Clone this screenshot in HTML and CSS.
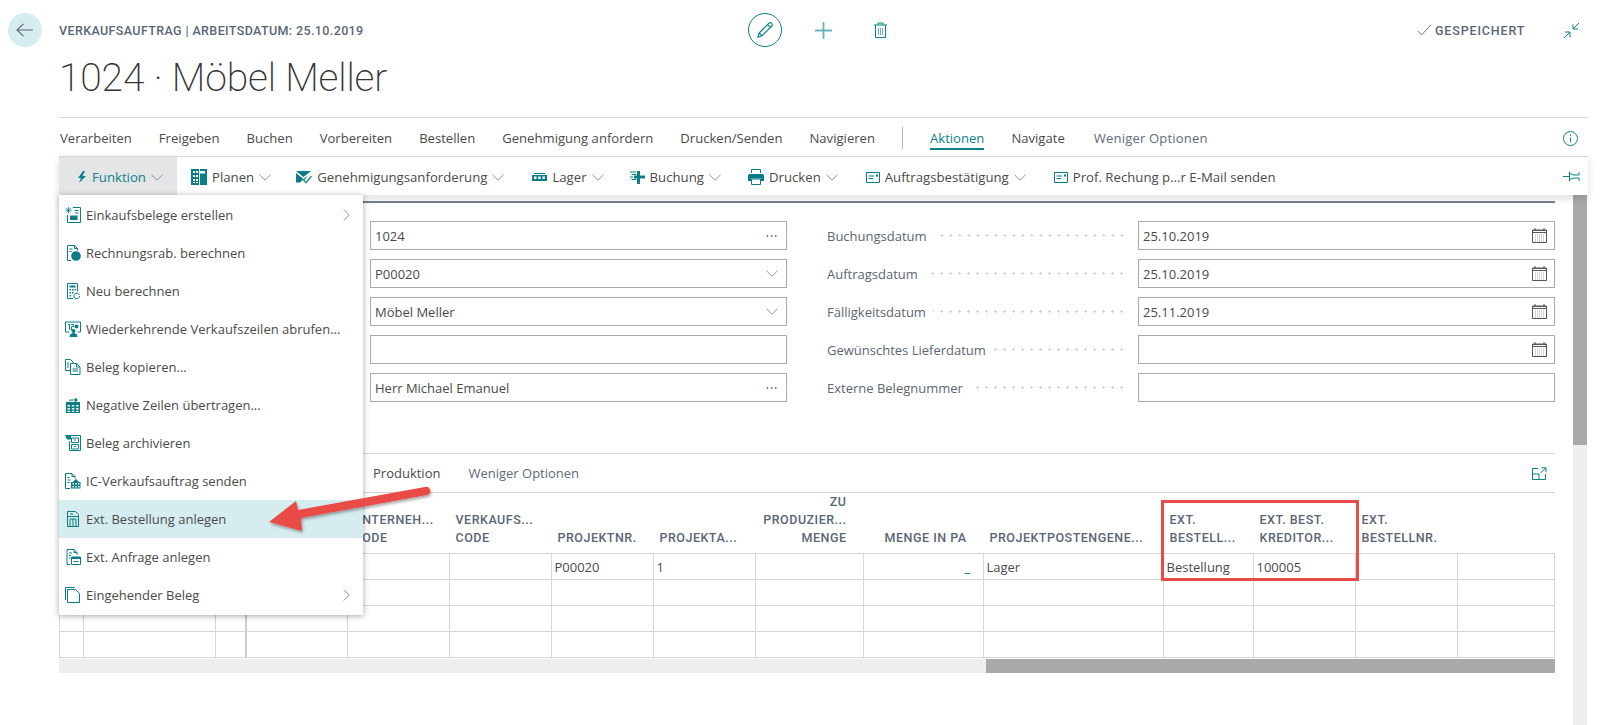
FILE: index.html
```html
<!DOCTYPE html>
<html lang="de">
  <head>
    <meta charset="UTF-8" />
    <meta name="viewport" content="width=device-width, initial-scale=1.0" />
    <title>1024 · Möbel Meller</title>
    <link rel="stylesheet" href="styles.css">
  </head>
  <body>
    <svg class="sprites" width="0" height="0" aria-hidden="true">
      <symbol id="chev-down" viewBox="0 0 12 7"><path d="M.5.8 6 6.200 11.500.8" fill="none" stroke="currentColor" stroke-width=".8"/></symbol>
      <symbol id="chev-right" viewBox="0 0 7 12"><path d="M.8.5 6.200 6 .8 11.500" fill="none" stroke="currentColor" stroke-width=".8"/></symbol>
      <symbol id="cal" viewBox="0 0 15 15">
        <path d="M.5 2.500h14v12H.5z" fill="none" stroke="#555"/>
        <path d="M.5 2h14v2.500H.5zM3 0v2M12 0v2" fill="none" stroke="#555"/>
        <path d="M3 7h9M3 9h9M3 11h9M3 13h9" stroke="#aaa" stroke-dasharray="1 1"/>
      </symbol>
    </svg>

    <div class="page">
      <!-- Page header -->
      <div class="topbar">
        <a class="back-btn">
          <svg width="18" height="14" viewBox="0 0 18 14"><path d="M17 7H1M7.500.8 1 7l6.500 6.200" fill="none" stroke="#5a6470" stroke-width="1.100"/></svg>
        </a>
        <div class="breadcrumb">VERKAUFSAUFTRAG | ARBEITSDATUM: 25.10.2019</div>
        <div class="page-actions">
          <a class="edit-btn">
            <svg width="20" height="20" viewBox="0 0 20 20"><path d="M4.200 13 14 3.200a1.600 1.600 0 0 1 2.400 0l.4.4a1.600 1.600 0 0 1 0 2.400L7 15.800 3 17zM12.600 4.600l2.800 2.800M4.200 13 7 15.800" fill="none" stroke="#0a8288" stroke-width="1.200"/></svg>
          </a>
          <svg class="plus-icon" width="17" height="17" viewBox="0 0 17 17"><path d="M8.500 0v17M0 8.500h17" stroke="#62b5b8" stroke-width="1.800"/></svg>
          <svg class="trash-icon" width="15" height="16" viewBox="0 0 15 16"><path d="M1 3h13M5 3V1h5v2M2.500 3v12.500h10V3" fill="none" stroke="#0a8288"/><path d="M5.500 6v7M7.500 6v7M9.500 6v7" stroke="#6ab5b8"/></svg>
        </div>
        <div class="saved">
          <svg width="15" height="12" viewBox="0 0 15 12"><path d="M.8 7 4.500 11 14 .8" fill="none" stroke="#6b7480"/></svg>
          GESPEICHERT
        </div>
        <svg class="collapse-icon" width="17" height="17" viewBox="0 0 17 17"><path d="M16 1 10 7M10 2.500V7h5M1 16l6-6M2 10h5v5" fill="none" stroke="#0a8288"/></svg>
      </div>
      <h1 class="title">1024 · Möbel Meller</h1>

      <!-- Action tabs -->
      <div class="tabs">
        <a>Verarbeiten</a>
        <a>Freigeben</a>
        <a>Buchen</a>
        <a>Vorbereiten</a>
        <a>Bestellen</a>
        <a>Genehmigung anfordern</a>
        <a>Drucken/Senden</a>
        <a>Navigieren</a>
        <span class="tab-sep"></span>
        <a class="active">Aktionen</a>
        <a>Navigate</a>
        <a class="muted">Weniger Optionen</a>
        <svg class="info-icon" width="15" height="15" viewBox="0 0 15 15"><circle cx="7.500" cy="7.500" r="7" fill="none" stroke="#0a8288"/><path d="M7.500 6.500v5M7.500 3.500v1.500" stroke="#0a8288"/></svg>
      </div>

      <div class="action-bar">
        <a class="action first">
          <svg width="10" height="12" viewBox="0 0 10 12"><path d="M6 0 1 7h3l-2 5 7-7H5.500L8 0z" fill="#0a8288"/></svg>
          <span class="teal">Funktion</span>
          <svg class="chev"><use href="#chev-down"/></svg>
        </a>
        <a class="action pr-11">
          <svg width="16" height="16" viewBox="0 0 16 16"><path d="M0 0h16v16H0z" fill="#0a7d85"/><path d="M2 2h2v2H2zM5 2h2v2H5zM9 2h5v2.500H9zM2 6h2v2H2zM5 6h2v2H5zM2 10h2v2H2zM5 10h2v2H5zM2 13h2v1H2zM5 13h2v1H5z" fill="#fff"/><path d="M8 0h1v16H8z" fill="#fff"/></svg>
          Planen
          <svg class="chev"><use href="#chev-down"/></svg>
        </a>
        <a class="action">
          <svg width="16" height="13" viewBox="0 0 16 13"><path d="M0 0h15L7.500 6zM0 2l7.500 6L12 4.500l-4 5-1-1-3 3H0z" fill="#0a7d85"/><path d="m7 8.500 3 3 5.500-6.500" fill="none" stroke="#3f8f95" stroke-width="1.600"/></svg>
          Genehmigungsanforderung
          <svg class="chev"><use href="#chev-down"/></svg>
        </a>
        <a class="action pr-12">
          <svg width="15" height="9" viewBox="0 0 15 9"><path d="M2 0h11v1H2zM0 2h15v6H0z" fill="#0a7d85"/><path d="M2 3.500h2.500V6H2zM6.200 3.500h2.500V6H6.200zM10.500 3.500H13V6h-2.500z" fill="#fff"/></svg>
          Lager
          <svg class="chev"><use href="#chev-down"/></svg>
        </a>
        <a class="action pr-13">
          <svg width="15" height="13" viewBox="0 0 15 13"><path d="M7 0h3v4.500h5v3h-5V13H7V7.500H4v-3h3z" fill="#0a7d85"/><path d="M0 1h6M1.500 3.500H6M0 6h3M1.500 8.500H6" stroke="#0a7d85"/></svg>
          Buchung
          <svg class="chev"><use href="#chev-down"/></svg>
        </a>
        <a class="action">
          <svg width="16" height="16" viewBox="0 0 16 16"><path d="M1.500 5h13A1.500 1.500 0 0 1 16 6.500V12h-3V9.500H3V12H0V6.500A1.500 1.500 0 0 1 1.500 5z" fill="#0a7d85"/><path d="M3.500 4V.5h9V4M3.500 10h9v5.500h-9z" fill="none" stroke="#0a7d85"/></svg>
          Drucken
          <svg class="chev"><use href="#chev-down"/></svg>
        </a>
        <a class="action">
          <svg width="14" height="11" viewBox="0 0 14 11"><path d="M.5.5h13v10H.5zM2.500 4H8M2.500 6.500H7" fill="none" stroke="#0a7d85"/><path d="M10 2.500h2v2h-2z" fill="#0a7d85"/></svg>
          Auftragsbestätigung
          <svg class="chev"><use href="#chev-down"/></svg>
        </a>
        <a class="action">
          <svg width="14" height="11" viewBox="0 0 14 11"><path d="M.5.5h13v10H.5zM2.500 4H8M2.500 6.500H7" fill="none" stroke="#0a7d85"/><path d="M10 2.500h2v2h-2z" fill="#0a7d85"/></svg>
          Prof. Rechung p...r E-Mail senden
        </a>
        <svg class="pin-icon" width="17" height="11" viewBox="0 0 17 11"><path d="M0 5.500h6M6.500.8v9.400M6.500 2.500 11 4h5V1.200M6.500 8.500 11 7h5v2.800" fill="none" stroke="#0a8288"/></svg>
      </div>

      <div class="content-row">
        <main class="content">
          <!-- General fields -->
          <section class="details">
            <div class="form">
              <div class="field">1024<span class="dots">···</span></div>
              <div class="form-row">
                <label>Buchungsdatum<i></i></label>
                <div class="field">25.10.2019<svg class="cal"><use href="#cal"/></svg></div>
              </div>
              <div class="field">P00020<svg class="chev"><use href="#chev-down"/></svg></div>
              <div class="form-row">
                <label>Auftragsdatum<i></i></label>
                <div class="field">25.10.2019<svg class="cal"><use href="#cal"/></svg></div>
              </div>
              <div class="field">Möbel Meller<svg class="chev"><use href="#chev-down"/></svg></div>
              <div class="form-row">
                <label>Fälligkeitsdatum<i></i></label>
                <div class="field">25.11.2019<svg class="cal"><use href="#cal"/></svg></div>
              </div>
              <div class="field"></div>
              <div class="form-row">
                <label>Gewünschtes Lieferdatum<i></i></label>
                <div class="field"><svg class="cal"><use href="#cal"/></svg></div>
              </div>
              <div class="field">Herr Michael Emanuel<span class="dots">···</span></div>
              <div class="form-row">
                <label>Externe Belegnummer<i></i></label>
                <div class="field"></div>
              </div>
            </div>
          </section>

          <!-- Lines -->
          <section class="lines">
            <div class="lines-tabs">
              <a>Produktion</a>
              <a class="muted">Weniger Optionen</a>
              <svg class="expand-icon" width="15" height="13" viewBox="0 0 15 13"><path d="M6 1.500H.5v11h13V7M.5 7H7v5.500M9.500.8H14v4.500M14 .8 8.500 6" fill="none" stroke="#0a8288"/></svg>
            </div>
            <table class="grid">
              <colgroup>
                <col class="w24"><col class="w132"><col class="w30"><col class="w102"><col class="w102"><col class="w102"><col class="w102"><col class="w102"><col class="w108"><col class="w120"><col class="w180"><col class="w90"><col class="w102"><col class="w102"><col class="w97">
              </colgroup>
              <thead>
                <tr>
                  <th></th>
                  <th></th>
                  <th></th>
                  <th></th>
                  <th>UNTERNEH...<br>CODE</th>
                  <th>VERKAUFS...<br>CODE</th>
                  <th>PROJEKTNR.</th>
                  <th>PROJEKTA...</th>
                  <th class="num">ZU<br>PRODUZIER...<br>MENGE</th>
                  <th class="num">MENGE IN PA</th>
                  <th>PROJEKTPOSTENGENE...</th>
                  <th>EXT.<br>BESTELL...</th>
                  <th>EXT. BEST.<br>KREDITOR...</th>
                  <th>EXT.<br>BESTELLNR.</th>
                  <th></th>
                </tr>
              </thead>
              <tbody>
                <tr>
                  <td></td><td></td><td></td><td class="split"></td><td></td><td></td>
                  <td>P00020</td><td>1</td><td></td><td class="num"><span class="drill">_</span></td>
                  <td>Lager</td><td>Bestellung</td><td>100005</td><td></td><td></td>
                </tr>
                <tr><td></td><td></td><td></td><td class="split"></td><td></td><td></td><td></td><td></td><td></td><td></td><td></td><td></td><td></td><td></td><td></td></tr>
                <tr><td></td><td></td><td></td><td class="split"></td><td></td><td></td><td></td><td></td><td></td><td></td><td></td><td></td><td></td><td></td><td></td></tr>
                <tr><td></td><td></td><td></td><td class="split"></td><td></td><td></td><td></td><td></td><td></td><td></td><td></td><td></td><td></td><td></td><td></td></tr>
              </tbody>
            </table>
            <div class="hscroll"><div class="hscroll-thumb"></div></div>
          </section>
        </main>
        <div class="vscroll"><div class="vscroll-thumb"></div></div>
      </div>

      <!-- Function dropdown -->
      <ul class="menu">
        <li>
          <svg width="16" height="16" viewBox="0 0 16 16"><path d="M8 .5h7.500v15H2.500V8" fill="none" stroke="#0a7d85"/><path d="M5 8.500h7.500v4.500H5z" fill="#0a7d85"/><path d="M10 3.500h3.500M10 6h3.500" stroke="#0a7d85"/><path d="M3.500 0v6.500M.5 3.200h6.200M1.200 1l4.500 4.500M5.700 1 1.200 5.500" stroke="#0a7d85" stroke-width=".8"/></svg>
          Einkaufsbelege erstellen
          <svg class="chev-r"><use href="#chev-right"/></svg>
        </li>
        <li>
          <svg width="16" height="16" viewBox="0 0 16 16"><path d="M6 15.500H2.500V.5h7l3 3v2" fill="none" stroke="#0a7d85"/><path d="M9.500.5v3h3M4.500 4h3M4.500 6.500h2" fill="none" stroke="#0a7d85"/><circle cx="11" cy="11" r="4.800" fill="#0a7d85"/></svg>
          Rechnungsrab. berechnen
        </li>
        <li>
          <svg width="16" height="16" viewBox="0 0 16 16"><path d="M8 15.500H2.500V.5h10v8" fill="none" stroke="#0a7d85"/><path d="M4.500 2.500h6v2h-6z" fill="#0a7d85"/><path d="M4.500 6h1.500v1.500H4.500zM7 6h1.500v1.500H7zM9.500 6H11v1.500H9.500zM4.500 9H6v1.500H4.500zM7 9h1.500v1.500H7zM4.500 12H6v1.500H4.500z" fill="#0a7d85"/><path d="M14.500 13a2.800 2.800 0 1 1-1-2.200l1 1" fill="none" stroke="#0a7d85"/></svg>
          Neu berechnen
        </li>
        <li>
          <svg width="16" height="16" viewBox="0 0 16 16"><path d="M4.500 11H.5V1h15v10h-3" fill="none" stroke="#0a7d85"/><path d="M3 3.500h1.500V9M6 3.500h2.500v2.200H6.500v3.300h2" fill="none" stroke="#0a7d85"/><circle cx="11.500" cy="5.500" r="2" fill="#0a7d85"/><circle cx="8.500" cy="10" r="2" fill="#0a7d85"/><path d="M4.500 16c0-3 2-4 4-4s4 1 4 4z" fill="#0a7d85"/></svg>
          Wiederkehrende Verkaufszeilen abrufen...
        </li>
        <li>
          <svg width="16" height="16" viewBox="0 0 16 16"><path d="M5 11.500H.5V.5h5l2.500 2.500v1" fill="none" stroke="#0a7d85"/><path d="M5.500 4.500h6l3.500 3.500v7.500H5.500zM11.500 4.500V8H15M7.500 10h5.500M7.500 12h5.500M2 4h2M2 6h2M2 8h2" fill="none" stroke="#0a7d85"/></svg>
          Beleg kopieren...
        </li>
        <li>
          <svg width="16" height="16" viewBox="0 0 16 16"><path d="M1 5h14v11H1z" fill="#0a7d85"/><path d="M2.500 8H5v1.500H2.500zM6.800 8h2.500v1.500H6.800zM11 8h2.500v1.500H11zM2.500 11H5v1.500H2.500zM6.800 11h2.500v1.500H6.800zM11 11h2.500v1.500H11zM2.500 13.800H5V15H2.500zM6.800 13.800h2.500V15H6.800zM11 13.800h2.500V15H11z" fill="#fff"/><path d="M5 4.500V3h6" fill="none" stroke="#0a7d85"/><path d="m10 .5 3 2.500-3 2.500z" fill="#0a7d85"/></svg>
          Negative Zeilen übertragen...
        </li>
        <li>
          <svg width="16" height="16" viewBox="0 0 16 16"><path d="M4.500 3.500V.5h11v15h-11v-9M6.500 3h7v4.500h-7zM6.500 9.500h7V14h-7zM9 5h2M9 11.500h2" fill="none" stroke="#0a7d85"/><path d="M0 0h6v4.500H2z" fill="#0a7d85"/></svg>
          Beleg archivieren
        </li>
        <li>
          <svg width="16" height="16" viewBox="0 0 16 16"><path d="M5 15.500H.5V.5h6.500l3 3v2M7 .5v3h3M2.500 4.500h2M2.500 7h3M2.500 9.500h2" fill="none" stroke="#0a7d85"/><path d="M11 6 7.500 9H6v6.500h9.500V9H14z" fill="#0a7d85"/><path d="M7.500 10h1.500v1.500H7.500zM10.300 10h1.500v1.500h-1.500zM13 10h1.500v1.500H13zM7.500 13h1.500v1.500H7.500zM10.300 13h1.500v1.500h-1.500zM13 13h1.500v1.500H13z" fill="#fff"/></svg>
          IC-Verkaufsauftrag senden
        </li>
        <li class="current">
          <svg width="16" height="16" viewBox="0 0 16 16"><path d="M2.500.5h8l3 3v12h-11zM2.500 5.500h11M5 8h6v7.500H5zM8 8v7.500M5 3h3" fill="none" stroke="#0a7d85"/></svg>
          Ext. Bestellung anlegen
        </li>
        <li>
          <svg width="16" height="16" viewBox="0 0 16 16"><path d="M5 15.500H2V.5h7l3 3v2.500M9 .5v3h3M4 4h3M4 6.500h2M4 9h1.500" fill="none" stroke="#0a7d85"/><path d="M6.500 8h9v7.500h-9z" fill="#fff" stroke="#0a7d85"/><path d="M6.500 8h9v2h-9zM8.500 12h5v1h-5z" fill="#0a7d85"/></svg>
          Ext. Anfrage anlegen
        </li>
        <li>
          <svg width="16" height="16" viewBox="0 0 16 16"><path d="M.5 13V.5h9" fill="none" stroke="#0a7d85"/><path d="M2.500 2.500h8l4 4v9h-12z" fill="none" stroke="#0a7d85"/></svg>
          Eingehender Beleg
          <svg class="chev-r"><use href="#chev-right"/></svg>
        </li>
      </ul>

      <!-- Annotations drawn over the page -->
      <div class="callout"></div>
      <svg class="arrow" width="180" height="60" viewBox="0 0 180 60">
        <defs><filter id="arrow-shadow" x="-10%" y="-20%" width="120%" height="150%"><feDropShadow dx="1" dy="2" stdDeviation="1.500" flood-color="#000" flood-opacity=".35"/></filter></defs>
        <path d="M4 36 31 15 33 24 160 1a4 4 0 0 1 2 8L36 32l1 13z" fill="#e94b47" filter="url(#arrow-shadow)"/>
      </svg>
    </div>
  </body>
</html>
```

FILE: styles.css
```css
/* General Styles */
* {
  box-sizing: border-box;
}

html,
body {
  margin: 0;
  padding: 0;
  height: 100%;
  overflow: hidden;
  background: white;
}

body {
  font-family: "Open Sans", sans-serif;
  font-size: 13px;
  color: #4a4a4a;
}

.sprites {
  position: absolute;
}

.page {
  position: relative;
  width: 1604px;
  height: 725px;
  padding-left: 59px;
  overflow: hidden;
}

.teal {
  color: #0a8288;
}

.muted {
  color: #5f6a7a;
}

/* Header */
.topbar {
  display: flex;
  align-items: center;
  width: 1529px;
  height: 34px;
  margin-top: 13px;
}

.back-btn {
  position: absolute;
  left: 8px;
  top: 13px;
  width: 34px;
  height: 34px;
  border-radius: 50%;
  background: #d6edf0;
  display: flex;
  align-items: center;
  justify-content: center;
}

.breadcrumb {
  width: 689px;
  font-family: Roboto, sans-serif;
  font-size: 12.5px;
  font-weight: 500;
  letter-spacing: 0.38px;
  color: #5a6675;
}

.page-actions {
  display: flex;
  align-items: center;
  width: 669px;
}

.edit-btn {
  width: 34px;
  height: 34px;
  border: 1px solid #0a8288;
  border-radius: 50%;
  display: flex;
  align-items: center;
  justify-content: center;
}

.plus-icon {
  margin-left: 33px;
}

.trash-icon {
  margin-left: 41px;
}

.saved {
  display: flex;
  align-items: center;
  gap: 3px;
  width: 146px;
  font-family: Roboto, sans-serif;
  font-size: 12.5px;
  font-weight: 500;
  letter-spacing: 0.85px;
  color: #5a6675;
}

.title {
  width: 1529px;
  height: 71px;
  margin: 0;
  padding-top: 1px;
  border-bottom: 1px solid #d6d6d6;
  font-family: Roboto, sans-serif;
  font-size: 39px;
  font-weight: 200;
  letter-spacing: -0.15px;
  line-height: 60px;
  color: #333;
}

/* Tabs */
.tabs {
  display: flex;
  align-items: center;
  gap: 27px;
  width: 1529px;
  height: 38px;
  padding: 2px 0 0 1px;
  font-size: 13.1px;
  white-space: nowrap;
}

.tab-sep {
  width: 1px;
  height: 22px;
  background: #b5b5b5;
}

.tabs .active {
  color: #0a8288;
  position: relative;
}

.tabs .active::after {
  content: "";
  position: absolute;
  left: 0;
  right: 0;
  top: 19px;
  height: 2px;
  background: #0a8288;
}

.tabs .muted {
  margin-left: 2px;
  letter-spacing: 0.15px;
}

.info-icon {
  margin-left: auto;
  margin-right: 10px;
}

/* Action bar */
.action-bar {
  position: relative;
  z-index: 2;
  display: flex;
  align-items: stretch;
  width: 1529px;
  height: 39px;
  border-top: 1px solid #d6d6d6;
  background: white;
  box-shadow: 0 4px 8px rgba(0, 0, 0, 0.12);
  font-size: 13.2px;
  white-space: nowrap;
}

.action {
  display: flex;
  align-items: center;
  gap: 5px;
  padding: 2px 14px 0;
}

.action.first {
  padding-left: 18px;
  background: #e4e5e7;
}

.action.pr-11 {
  padding-right: 11px;
}

.action.pr-12 {
  padding-right: 12px;
}

.action.pr-13 {
  padding-right: 13px;
}

.action .chev {
  width: 12px;
  height: 7px;
  color: #777;
}

.pin-icon {
  margin-left: auto;
  margin-right: 8px;
  align-self: center;
}

/* Content */
.content-row {
  display: flex;
  gap: 18px;
  height: 530px;
}

.content {
  width: 1496px;
  padding-top: 6px;
}

.vscroll {
  width: 14px;
  background: #eeeeee;
}

.vscroll-thumb {
  height: 250px;
  background: #a9a9a9;
}

/* Form */
.details {
  border-top: 2px solid #76808c;
  padding: 18px 0 0 311px;
}

.form {
  display: grid;
  grid-template-columns: 417px 1fr;
  column-gap: 40px;
  row-gap: 9px;
  grid-auto-rows: 29px;
}

.form-row {
  display: flex;
}

.form-row label {
  display: flex;
  align-items: center;
  width: 311px;
  padding-right: 12px;
  color: #5c6672;
  white-space: nowrap;
}

.form-row label i {
  flex: 1;
  height: 3px;
  margin-left: 7px;
  background: radial-gradient(circle, #d0d0d0 1px, transparent 1.2px) right / 9px 3px repeat-x;
}

.field {
  flex: 1;
  display: flex;
  align-items: center;
  justify-content: space-between;
  padding: 0 5px 0 4px;
  border: 1px solid #a9a9a9;
}

.field .chev {
  width: 12px;
  height: 7px;
  margin-right: 3px;
  color: #777;
}

.field .cal {
  width: 15px;
  height: 15px;
  margin-left: auto;
  margin-right: 2px;
}

.dots {
  font-size: 14px;
  letter-spacing: 0.5px;
  color: #666;
  margin-right: 3px;
}

/* Lines */
.lines {
  margin-top: 51px;
}

.lines-tabs {
  position: relative;
  display: flex;
  align-items: center;
  gap: 28px;
  height: 40px;
  padding-left: 314px;
  border-top: 1px solid #d6d6d6;
  border-bottom: 1px solid #d6d6d6;
}

.expand-icon {
  margin-left: auto;
  margin-right: 8px;
}

.grid {
  width: 1496px;
  table-layout: fixed;
  border-collapse: collapse;
}

.w24 { width: 24px; }
.w30 { width: 30px; }
.w90 { width: 90px; }
.w97 { width: 97px; }
.w102 { width: 102px; }
.w108 { width: 108px; }
.w120 { width: 120px; }
.w132 { width: 132px; }
.w180 { width: 180px; }

.grid th {
  height: 59px;
  padding: 0 6px 6px;
  vertical-align: bottom;
  text-align: left;
  font-family: Roboto, sans-serif;
  font-size: 12.5px;
  font-weight: 500;
  line-height: 18px;
  letter-spacing: 0.5px;
  color: #5a6675;
  white-space: nowrap;
}

.grid th.num {
  text-align: right;
  padding-right: 17px;
}

.grid td {
  height: 26px;
  padding: 0 2.5px;
  border: 1px solid #d4d6da;
  white-space: nowrap;
}

.grid td.num {
  text-align: right;
  padding-right: 13px;
}

.grid td.split {
  border-left: 2px solid #c9ccd1;
}

.drill {
  color: #0a6e74;
  font-weight: 600;
}

.hscroll {
  display: flex;
  justify-content: flex-end;
  height: 14px;
  margin-top: 1px;
  background: #eeeeee;
}

.hscroll-thumb {
  width: 569px;
  background: #a9a9a9;
}

/* Dropdown menu */
.menu {
  position: absolute;
  z-index: 3;
  left: 59px;
  top: 195px;
  width: 304px;
  margin: 0;
  padding: 1px 0;
  list-style: none;
  background: white;
  box-shadow: 0 1px 6px rgba(0, 0, 0, 0.35);
}

.menu li {
  display: flex;
  align-items: center;
  gap: 5px;
  height: 38px;
  padding: 0 13px 0 6px;
  white-space: nowrap;
}

.menu li.current {
  background: #d6edf0;
}

.chev-r {
  width: 7px;
  height: 12px;
  margin-left: auto;
  color: #777;
}

/* Annotations */
.callout {
  position: absolute;
  z-index: 4;
  left: 1161px;
  top: 500px;
  width: 198px;
  height: 81px;
  border: 3px solid #e94b47;
}

.arrow {
  position: absolute;
  z-index: 5;
  left: 265px;
  top: 486px;
}
```
